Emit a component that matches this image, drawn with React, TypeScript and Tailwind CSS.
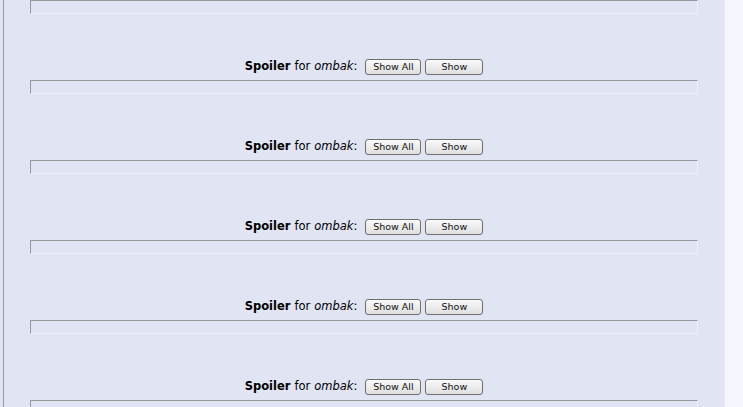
import React from 'react'

function SpoilerBox() {
  return (
    <div className="mx-[26px] h-[14px] border-t border-l border-b border-r border-t-[#999999] border-l-[#999999] border-b-[#f0f1f8] border-r-[#f0f1f8]" />
  )
}

function SpoilerHeader() {
  return (
    <div className="flex h-[16px] items-center justify-center text-[11.5px] leading-none text-black">
      <span className="mb-[1px] font-bold">Spoiler</span>
      <span className="mb-[1px] ml-[4px]">for</span>
      <span className="mb-[1px] ml-[4px] italic">ombak</span>
      <span className="mb-[1px]">:</span>
      <button className="ml-[8px] h-[16px] w-[56px] rounded-[3px] border border-[#6f6f6f] bg-gradient-to-b from-[#fbfbfb] to-[#dedede] text-[9.5px] leading-none text-[#111111]">
        Show All
      </button>
      <button className="ml-[4px] h-[16px] w-[58px] rounded-[3px] border border-[#6f6f6f] bg-gradient-to-b from-[#fbfbfb] to-[#dedede] text-[9.5px] leading-none text-[#111111]">
        Show
      </button>
    </div>
  )
}

export default function App() {
  const posts = [1, 2, 3, 4, 5]

  return (
    <div
      className="flex h-[407px] w-[743px] overflow-hidden bg-[#f4f5fe]"
      style={{ fontFamily: '"DejaVu Sans", Verdana, sans-serif' }}
    >
      <div className="w-[3px] bg-[#e1e4f2]" />
      <div className="w-[722px] border-l border-r border-l-[#999999] border-r-[#e9ebf6] bg-[#e1e4f2]">
        <SpoilerBox />
        {posts.map((p) => (
          <div key={p} className="mt-[45px]">
            <SpoilerHeader />
            <div className="mt-[5px]">
              <SpoilerBox />
            </div>
          </div>
        ))}
      </div>
    </div>
  )
}
